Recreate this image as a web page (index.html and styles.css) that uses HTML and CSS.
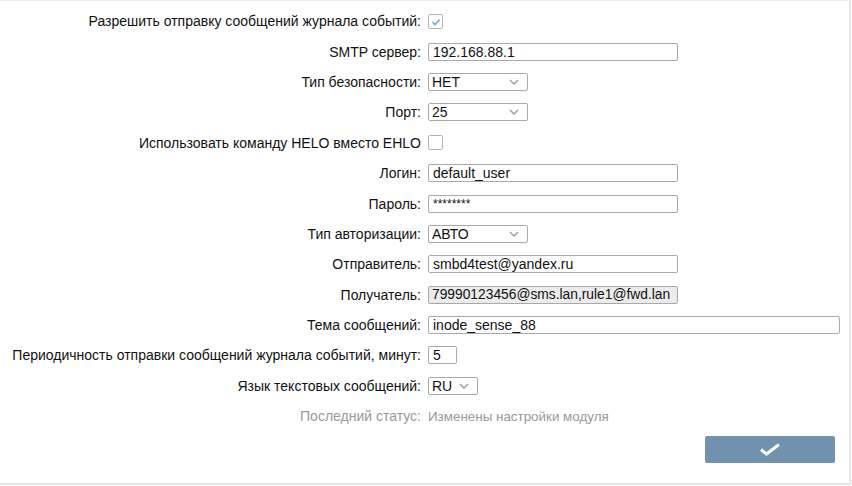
FILE: index.html
```html
<!DOCTYPE html>
<html>
<head>
    <title>Журнал событий</title>
    <link rel="stylesheet" href="styles.css">
</head>
<body>
    <div class="panel">
        <div class="form">
            <label class="lbl">Разрешить отправку сообщений журнала событий:</label>
            <div class="ctl"><span class="check on"><svg viewBox="0 0 14 14" width="14" height="14"><path d="M3.5 7.2 L6 9.6 L10.6 4.6" fill="none" stroke="#72aee6" stroke-width="1.6"/></svg></span></div>

            <label class="lbl">SMTP сервер:</label>
            <div class="ctl"><input type="text" class="txt" value="192.168.88.1"></div>

            <label class="lbl">Тип безопасности:</label>
            <div class="ctl"><div class="sel w100"><select><option>НЕТ</option></select><svg class="arrow" viewBox="0 0 10 6" width="10" height="6"><path d="M1 1 L5 5 L9 1" fill="none" stroke="#9a9a9a" stroke-width="1.4"/></svg></div></div>

            <label class="lbl">Порт:</label>
            <div class="ctl"><div class="sel w100"><select><option>25</option></select><svg class="arrow" viewBox="0 0 10 6" width="10" height="6"><path d="M1 1 L5 5 L9 1" fill="none" stroke="#9a9a9a" stroke-width="1.4"/></svg></div></div>

            <label class="lbl">Использовать команду HELO вместо EHLO</label>
            <div class="ctl"><span class="check"></span></div>

            <label class="lbl">Логин:</label>
            <div class="ctl"><input type="text" class="txt" value="default_user"></div>

            <label class="lbl">Пароль:</label>
            <div class="ctl"><input type="text" class="txt pass" value="********"></div>

            <label class="lbl">Тип авторизации:</label>
            <div class="ctl"><div class="sel w100"><select><option>АВТО</option></select><svg class="arrow" viewBox="0 0 10 6" width="10" height="6"><path d="M1 1 L5 5 L9 1" fill="none" stroke="#9a9a9a" stroke-width="1.4"/></svg></div></div>

            <label class="lbl">Отправитель:</label>
            <div class="ctl"><input type="text" class="txt" value="smbd4test@yandex.ru"></div>

            <label class="lbl">Получатель:</label>
            <div class="ctl"><input type="text" class="txt" value="79990123456@sms.lan,rule1@fwd.lan" disabled></div>

            <label class="lbl">Тема сообщений:</label>
            <div class="ctl"><input type="text" class="txt wide" value="inode_sense_88"></div>

            <label class="lbl">Периодичность отправки сообщений журнала событий, минут:</label>
            <div class="ctl"><input type="text" class="txt short" value="5"></div>

            <label class="lbl">Язык текстовых сообщений:</label>
            <div class="ctl"><div class="sel w50"><select><option>RU</option></select><svg class="arrow" viewBox="0 0 10 6" width="10" height="6"><path d="M1 1 L5 5 L9 1" fill="none" stroke="#9a9a9a" stroke-width="1.4"/></svg></div></div>

            <label class="lbl muted">Последний статус:</label>
            <div class="ctl muted status">Изменены настройки модуля</div>
        </div>

        <div class="actions">
            <button class="save"><svg viewBox="0 0 22 13" width="22" height="13"><path d="M2 6.5 L7.5 11 L20 1.5" fill="none" stroke="#fff" stroke-width="3"/></svg></button>
        </div>
    </div>
</body>
</html>
```

FILE: styles.css
```css
html, body { margin: 0; padding: 0; background: #fff; }
body { font-family: "Liberation Sans", Arial, sans-serif; font-size: 14px; color: #111; }

.panel {
    width: 849px;
    height: 482px;
    border-top: 1px solid #eeeeee;
    border-right: 2px solid #e6e6e6;
    border-bottom: 2px solid #e6e6e6;
    background: #fff;
}

.form {
    display: grid;
    grid-template-columns: 421px 1fr;
    grid-auto-rows: 30.4px;
    column-gap: 7px;
    padding-top: 5px;
}
.lbl { text-align: right; align-self: center; white-space: nowrap; }
.ctl { display: flex; align-items: center; }
.muted { color: #999; }
.status { font-size: 13.4px; }

.txt {
    box-sizing: border-box;
    width: 250px;
    height: 18px;
    padding: 0 4px;
    border: 1px solid #a9a9a9;
    border-radius: 2px;
    font: 14px "Liberation Sans", Arial, sans-serif;
    color: #111;
    background: #fff;
}
.txt:disabled {
    background: #ebebeb;
    color: #111;
    -webkit-text-fill-color: #111;
    opacity: 1;
    font-size: 13.8px;
    padding: 0 3px;
}
.txt.wide { width: 412px; }
.txt.short { width: 29px; }
.txt.pass { font-size: 12px; }

.sel { position: relative; height: 18px; }
.sel select {
    box-sizing: border-box;
    width: 100%;
    height: 18px;
    padding: 0 0 0 3px;
    border: 1px solid #a9a9a9;
    border-radius: 2px;
    background: #fff;
    font: 14px "Liberation Sans", Arial, sans-serif;
    color: #111;
    appearance: none;
    -webkit-appearance: none;
}
.sel .arrow { position: absolute; top: 6px; right: 9px; pointer-events: none; }
.w100 { width: 100px; }
.w50 { width: 50px; }

.check {
    box-sizing: border-box;
    display: inline-block;
    width: 15px;
    height: 15px;
    border: 1px solid #b4b4b4;
    border-radius: 2px;
    background: #fff;
}
.check svg { display: block; margin: 0; }

.actions {
    display: flex;
    justify-content: flex-end;
    padding: 5px 14px 0 0;
}
.save {
    width: 130px;
    height: 27px;
    border: none;
    border-radius: 2px;
    background: #7092ae;
    cursor: pointer;
    display: flex;
    align-items: center;
    justify-content: center;
}
```
